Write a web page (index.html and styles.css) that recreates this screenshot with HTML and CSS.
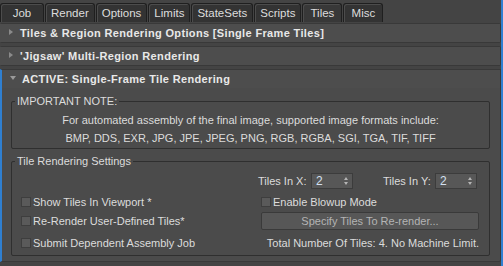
FILE: index.html
```html
<!DOCTYPE html>
<html lang="en">
<head>
  <meta charset="UTF-8">
  <title>Tiles</title>
  <link rel="stylesheet" href="styles.css">
</head>
<body>
  <div class="panel">
    <div class="tabs">
      <div class="tab">Job</div>
      <div class="tab">Render</div>
      <div class="tab">Options</div>
      <div class="tab">Limits</div>
      <div class="tab">StateSets</div>
      <div class="tab">Scripts</div>
      <div class="tab active">Tiles</div>
      <div class="tab">Misc</div>
    </div>

    <div class="rollout">
      <div class="rollout-head"><span class="arrow closed"></span>Tiles &amp; Region Rendering Options [Single Frame Tiles]<span class="grip"></span></div>
    </div>
    <div class="rollout">
      <div class="rollout-head"><span class="arrow closed"></span>'Jigsaw' Multi-Region Rendering<span class="grip"></span></div>
    </div>
    <div class="rollout open">
      <div class="rollout-head"><span class="arrow"></span>ACTIVE: Single-Frame Tile Rendering<span class="grip"></span></div>
      <div class="rollout-body">
        <fieldset class="group note">
          <legend>IMPORTANT NOTE:</legend>
          <p>For automated assembly of the final image, supported image formats include:</p>
          <p>BMP, DDS, EXR, JPG, JPE, JPEG, PNG, RGB, RGBA, SGI, TGA, TIF, TIFF</p>
        </fieldset>

        <fieldset class="group settings">
          <legend>Tile Rendering Settings</legend>
          <div class="row row-spin">
            <div></div>
            <div class="spins">
              <label>Tiles In X:</label>
              <div class="spinner"><span>2</span><span class="spin-arrows"></span></div>
              <label class="y-label">Tiles In Y:</label>
              <div class="spinner"><span>2</span><span class="spin-arrows"></span></div>
            </div>
          </div>
          <div class="row row-check">
            <label class="check"><span class="box"></span>Show Tiles In Viewport *</label>
            <label class="check"><span class="box"></span>Enable Blowup Mode</label>
          </div>
          <div class="row row-button">
            <label class="check"><span class="box"></span>Re-Render User-Defined Tiles*</label>
            <button class="btn">Specify Tiles To Re-render...</button>
          </div>
          <div class="row row-total">
            <label class="check"><span class="box"></span>Submit Dependent Assembly Job</label>
            <div class="total">Total Number Of Tiles: 4. No Machine Limit.</div>
          </div>
        </fieldset>
      </div>
    </div>
  </div>
</body>
</html>
```

FILE: styles.css
```css
body {
  margin: 0;
  background: #444444;
  font-family: 'Liberation Sans', Arial, sans-serif;
  font-size: 11px;
  color: #dcdcdc;
}
.panel {
  width: 503px;
  height: 266px;
  box-sizing: border-box;
  border-right: 2px solid #2f7fd0;
  overflow: hidden;
}
.tabs {
  display: flex;
  gap: 1px;
  height: 22px;
  padding-top: 3px;
  box-sizing: border-box;
}
.tab {
  min-width: 40px;
  padding: 0 5px;
  box-sizing: border-box;
  background: #333333;
  border: 1px solid #1f1f1f;
  border-bottom: none;
  border-radius: 3px 3px 0 0;
  box-shadow: inset 1px 1px 0 #4c4c4c;
  text-align: center;
  line-height: 18px;
  font-size: 11.5px;
  color: #dddddd;
}
.tab:first-child {
  min-width: 44px;
}
.tab.active {
  background: #383838;
}
.rollout {
  margin: 1px 0 3px 0;
  background: #4b4b4b;
  border: 1px solid #393939;
  border-left: none;
  border-radius: 2px;
}
.rollout.open {
  border-left: 2px solid #2f7fd0;
  border-radius: 0 0 2px 0;
  height: 193px;
  box-sizing: border-box;
}
.rollout-head {
  position: relative;
  height: 18px;
  line-height: 18px;
  padding-left: 20px;
  font-weight: bold;
  letter-spacing: 0.35px;
  color: #e8e8e8;
  background: #4d4d4d;
}
.arrow {
  position: absolute;
  left: 8px;
  top: 6px;
  width: 0;
  height: 0;
  border-left: 3px solid transparent;
  border-right: 3px solid transparent;
  border-top: 4px solid #9a9a9a;
}
.arrow.closed {
  left: 9px;
  top: 5px;
  border-top: 3px solid transparent;
  border-bottom: 3px solid transparent;
  border-left: 4px solid #8a8a8a;
  border-right: none;
}
.grip {
  position: absolute;
  right: 6px;
  top: 6px;
  width: 5px;
  height: 5px;
  background-image: radial-gradient(#8c8c8c 0.6px, transparent 0.7px);
  background-size: 2px 2px;
  background-position: 0 0;
}
.rollout-body {
  padding: 7px 10px 0 9px;
}
.group {
  margin: 0;
  border: 1px solid #2f2f2f;
  border-radius: 2px;
}
.group legend {
  padding: 0 2px;
  line-height: 13px;
  text-align: left;
}
.note {
  padding: 3px 0 1px 0;
}
.note legend {
  margin-left: 3px;
}
.note p {
  margin: 0;
  line-height: 18px;
  text-align: center;
}
.settings {
  margin-top: 6px;
  padding: 5px 9px 3px 9px;
}
.settings legend {
  margin-left: -6px;
}
.row {
  display: grid;
  grid-template-columns: 240px 218px;
  align-items: center;
}
.row-spin {
  height: 16px;
}
.row-check {
  height: 18px;
  margin-top: 4px;
}
.row-button {
  height: 18px;
  margin-top: 1px;
}
.row-total {
  height: 18px;
  margin-top: 4px;
}
.spins {
  display: flex;
  align-items: center;
  width: 221px;
  margin-left: -3px;
  white-space: nowrap;
}
.spins label {
  width: 53px;
  flex-shrink: 0;
}
.spins .y-label {
  margin-left: 30px;
  width: 52px;
}
.spinner {
  position: relative;
  flex-shrink: 0;
  width: 42px;
  height: 16px;
  box-sizing: border-box;
  background: #575757;
  border: 1px solid #3c3c3c;
  padding-left: 4px;
  line-height: 14px;
  font-size: 12px;
  color: #d4e0f0;
}
.spin-arrows {
  position: absolute;
  right: 4px;
  top: 3px;
  width: 0;
  height: 0;
  border-left: 2px solid transparent;
  border-right: 2px solid transparent;
  border-bottom: 3px solid #b5b5b5;
}
.spin-arrows::after {
  content: '';
  position: absolute;
  left: -2px;
  top: 5px;
  border-left: 2px solid transparent;
  border-right: 2px solid transparent;
  border-top: 3px solid #b5b5b5;
}
.check {
  display: flex;
  align-items: center;
}
.box {
  width: 10px;
  height: 10px;
  box-sizing: border-box;
  background: #5a5a5a;
  border: 1px solid #3e3e3e;
  margin-right: 2px;
}
.btn {
  height: 18px;
  width: 218px;
  background: #575757;
  border: 1px solid #3a3a3a;
  border-radius: 2px;
  font-family: inherit;
  font-size: 11px;
  color: #b4b4b4;
  padding: 0;
}
.total {
  text-align: right;
}
```
